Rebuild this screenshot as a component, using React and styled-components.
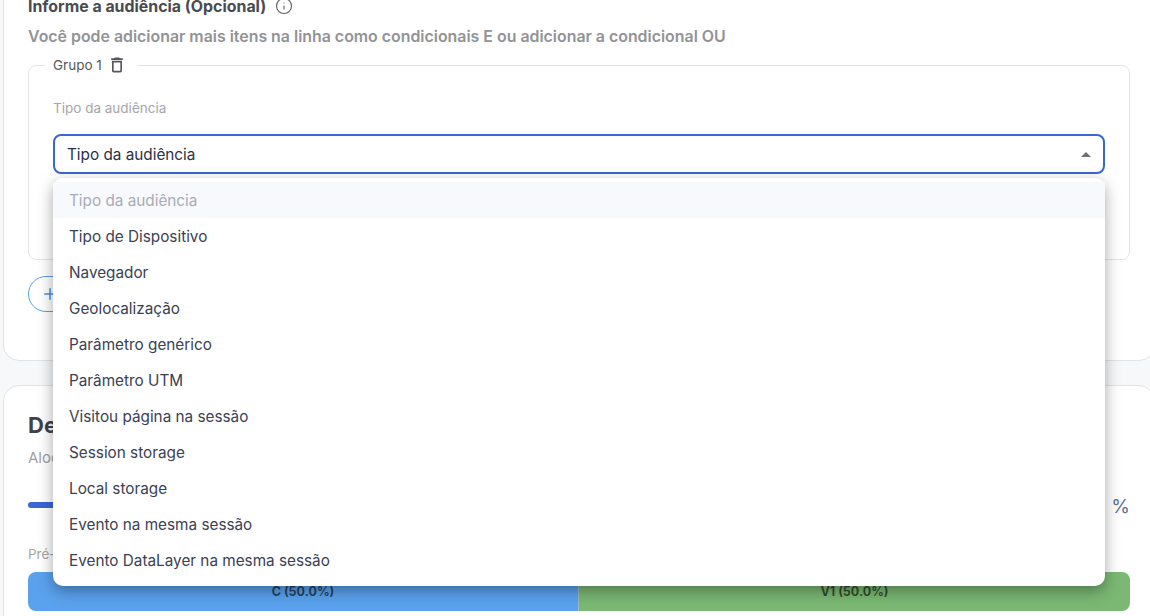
import styled, { createGlobalStyle } from "styled-components";
import { Info, Plus } from "lucide-react";

const options = [
  "Tipo da audiência",
  "Tipo de Dispositivo",
  "Navegador",
  "Geolocalização",
  "Parâmetro genérico",
  "Parâmetro UTM",
  "Visitou página na sessão",
  "Session storage",
  "Local storage",
  "Evento na mesma sessão",
  "Evento DataLayer na mesma sessão",
];

function TrashIcon() {
  return (
    <svg width="20" height="20" viewBox="0 0 24 24" fill="#55575c">
      <path d="M6 19c0 1.1.9 2 2 2h8c1.1 0 2-.9 2-2V7H6v12zM8 9h8v10H8V9zm7.5-5l-1-1h-5l-1 1H5v2h14V4z" />
    </svg>
  );
}

export default function App() {
  return (
    <Page>
      <GlobalStyle />
      <Scroller>
        <Card>
          <TitleRow>
            <Title>Informe a audiência (Opcional)</Title>
            <Info size={18} strokeWidth={1.5} color="#5c5e63" />
          </TitleRow>
          <Hint>Você pode adicionar mais itens na linha como condicionais E ou adicionar a condicional OU</Hint>
          <Group>
            <Legend>
              Grupo 1
              <TrashIcon />
            </Legend>
            <FieldLabel>Tipo da audiência</FieldLabel>
            <SelectWrap>
              <Select>
                Tipo da audiência
                <Caret />
              </Select>
              <Menu>
                {options.map((option, i) => (
                  <MenuItem key={option} $placeholder={i === 0}>
                    {option}
                  </MenuItem>
                ))}
              </Menu>
            </SelectWrap>
          </Group>
          <AddButton>
            <Plus size={18} strokeWidth={2} />
            Adicionar grupo
          </AddButton>
        </Card>
        <Card $second>
          <Heading>Defina a distribuição</Heading>
          <Sub>Alocação do tráfego</Sub>
          <SliderRow>
            <SliderTrack />
            <Percent>%</Percent>
          </SliderRow>
          <BarLabel>Pré-visualização</BarLabel>
          <Bar>
            <Segment $color="#5aa2ed">C (50.0%)</Segment>
            <Segment $color="#7ab873" $divider>V1 (50.0%)</Segment>
          </Bar>
        </Card>
      </Scroller>
    </Page>
  );
}

const GlobalStyle = createGlobalStyle`
  html, body {
    margin: 0;
    height: 100%;
    overflow: hidden;
    background: #f7f8fa;
    font-family: Inter, "Liberation Sans", sans-serif;
  }
  * { box-sizing: border-box; }
`;

const Page = styled.div`
  width: 1150px;
  height: 616px;
  overflow: hidden;
`;

const Scroller = styled.div`
  display: flex;
  flex-direction: column;
  gap: 24px;
  width: 1152px;
  margin-top: -28px;
  margin-left: 3px;
`;

const Card = styled.section`
  background: #fff;
  border: 1px solid #e2e3e6;
  border-radius: 16px;
  padding: ${(p) => (p.$second ? "25px 24px 24px" : "23px 24px 48px")};
`;

const TitleRow = styled.div`
  display: flex;
  align-items: center;
  gap: 9px;
  height: 20px;
`;

const Title = styled.h3`
  margin: 0;
  font-size: 15.9px;
  font-weight: 700;
  color: #4a4b4f;
`;

const Hint = styled.p`
  margin: 11px 0 0;
  font-size: 15.9px;
  line-height: 20px;
  font-weight: 600;
  color: #929396;
`;

const Group = styled.fieldset`
  margin: 8px 0 0;
  padding: 0 24px 85px;
  border: 1px solid #e3e4e6;
  border-radius: 8px;
  height: 205px;
`;

const Legend = styled.legend`
  display: flex;
  align-items: center;
  gap: 5px;
  margin-left: -8px;
  padding: 0 10px 0 8px;
  font-size: 13.5px;
  color: #55575c;
`;

const FieldLabel = styled.div`
  margin-top: 24px;
  font-size: 13.5px;
  line-height: 18px;
  color: #a5a6a9;
`;

const SelectWrap = styled.div`
  position: relative;
  margin-top: 17px;
`;

const Select = styled.div`
  display: flex;
  align-items: center;
  justify-content: space-between;
  height: 40px;
  padding: 0 12px 0 12px;
  border: 2px solid #3a66d6;
  border-radius: 8px;
  font-size: 15.3px;
  color: #2a3142;
`;

const Caret = styled.span`
  width: 0;
  height: 0;
  border-left: 5px solid transparent;
  border-right: 5px solid transparent;
  border-bottom: 5px solid #707070;
`;

const Menu = styled.ul`
  position: absolute;
  top: 44px;
  left: 0;
  right: 0;
  z-index: 10;
  margin: 0;
  padding: 4px 0 8px;
  list-style: none;
  background: #fff;
  border-radius: 10px;
  box-shadow: 0 5px 15px rgba(0, 0, 0, 0.35);
`;

const MenuItem = styled.li`
  height: 36px;
  padding: 0 16px;
  line-height: 38px;
  font-size: 15.3px;
  color: ${(p) => (p.$placeholder ? "#a9acb4" : "#3a4152")};
  background: ${(p) => (p.$placeholder ? "#f8f9fd" : "transparent")};
`;

const AddButton = styled.button`
  display: flex;
  align-items: center;
  gap: 8px;
  height: 36px;
  margin-top: 16px;
  padding: 0 16px 0 12px;
  background: #fff;
  border: 1px solid #5a9fe8;
  border-radius: 18px;
  color: #3f8fe6;
  font: 600 14px Inter, sans-serif;
`;

const Heading = styled.h2`
  margin: 0;
  font-size: 22px;
  line-height: 28px;
  font-weight: 700;
  color: #414246;
`;

const Sub = styled.p`
  margin: 9px 0 0;
  font-size: 15px;
  line-height: 20px;
  color: #a0a1a4;
`;

const SliderRow = styled.div`
  display: flex;
  align-items: center;
  justify-content: space-between;
  margin-top: 25px;
  height: 24px;
`;

const SliderTrack = styled.div`
  width: 500px;
  height: 6px;
  border-radius: 3px;
  background: #3a66d6;
`;

const Percent = styled.span`
  margin-top: 3px;
  font-size: 19px;
  color: #5f6f94;
`;

const BarLabel = styled.div`
  margin-top: 28px;
  font-size: 13.5px;
  line-height: 18px;
  color: #a5a6a9;
`;

const Bar = styled.div`
  display: grid;
  grid-template-columns: 550px 1fr;
  height: 39px;
  margin-top: 9px;
  border-radius: 8px;
  overflow: hidden;
`;

const Segment = styled.div`
  display: flex;
  align-items: center;
  justify-content: center;
  background: ${(p) => p.$color};
  border-left: ${(p) => (p.$divider ? "1px solid #9db8c8" : "none")};
  font-size: 12.5px;
  font-weight: 700;
  color: rgba(0, 0, 0, 0.6);
`;
